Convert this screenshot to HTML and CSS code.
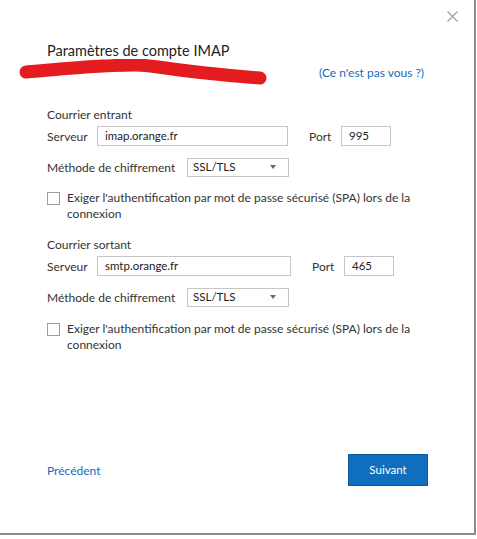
FILE: index.html
```html
<!DOCTYPE html>
<html lang="fr">
<head>
    <meta charset="UTF-8"/>
    <title>Paramètres de compte IMAP</title>
<link rel="stylesheet" href="styles.css">
</head>
<body>
    <div class="window">
        <!-- close button -->
        <div class="topbar">
            <span class="close">
                <svg width="11" height="11" viewBox="0 0 11 11">
                    <path d="M0.5 0.5 L10.5 10.5 M10.5 0.5 L0.5 10.5" stroke="#9a9a9a" stroke-width="1.1" fill="none"/>
                </svg>
            </span>
        </div>

        <h1 class="title">Paramètres de compte IMAP</h1>

        <!-- account line (hidden by a red marker stroke) -->
        <div class="account">
            <svg class="scribble" width="252" height="26" viewBox="0 0 252 26">
                <path d="M8 13 C 35 11, 60 8, 85 7 S 120 5, 140 8 S 190 15, 242 19"
                      stroke="#e41b1f" stroke-width="13" stroke-linecap="round" fill="none"/>
            </svg>
            <a class="not-you" href="#">(Ce n'est pas vous ?)</a>
        </div>

        <!-- incoming mail -->
        <div class="group">
            <div class="group-title">Courrier entrant</div>
            <div class="row">
                <span class="lbl server-lbl">Serveur</span>
                <span class="field server">imap.orange.fr</span>
                <span class="lbl port-lbl">Port</span>
                <span class="field port">995</span>
            </div>
            <div class="row">
                <span class="lbl method-lbl">Méthode de chiffrement</span>
                <span class="select">SSL/TLS<span class="caret"></span></span>
            </div>
            <div class="check-row">
                <span class="box"></span>
                <span class="check-text">Exiger l'authentification par mot de passe sécurisé (SPA) lors de la connexion</span>
            </div>
        </div>

        <!-- outgoing mail -->
        <div class="group">
            <div class="group-title">Courrier sortant</div>
            <div class="row">
                <span class="lbl server-lbl">Serveur</span>
                <span class="field server wide">smtp.orange.fr</span>
                <span class="lbl port-lbl">Port</span>
                <span class="field port">465</span>
            </div>
            <div class="row">
                <span class="lbl method-lbl">Méthode de chiffrement</span>
                <span class="select">SSL/TLS<span class="caret"></span></span>
            </div>
            <div class="check-row">
                <span class="box"></span>
                <span class="check-text">Exiger l'authentification par mot de passe sécurisé (SPA) lors de la connexion</span>
            </div>
        </div>

        <div class="footer">
            <a class="prev" href="#">Précédent</a>
            <span class="next">Suivant</span>
        </div>
    </div>
</body>
</html>
```

FILE: styles.css
```css
* {
    margin: 0;
    padding: 0;
    box-sizing: border-box;
}

html, body {
    background: #fff;
}

body {
    font: 12px Lato, "Open Sans", sans-serif;
    color: #333;
}

.window {
    width: 476px;
    height: 535px;
    display: flex;
    flex-direction: column;
    padding: 0 0 0 47px;
    border-right: 2px solid #8c8c8c;
    border-bottom: 2px solid #8c8c8c;
}

/* Top bar with close cross */
.topbar {
    display: flex;
    justify-content: flex-end;
    padding: 10px 16px 0 0;
    height: 24px;
}

.close {
    width: 11px;
    height: 11px;
}

.title {
    font: 14.5px Lato, "Open Sans", sans-serif;
    color: #222;
    line-height: 20px;
    margin-top: 17px;
}

.account {
    display: flex;
    align-items: center;
    height: 26px;
    margin-top: -2px;
    padding-right: 50px;
}

.scribble {
    margin-left: -29px;
    flex: none;
}

.not-you {
    margin-left: auto;
    color: #0f6cbd;
    text-decoration: none;
    font-size: 12px;
}

/* Groups of fields */
.group {
    margin-top: 22px;
}

.group + .group {
    margin-top: 15px;
}

.group-title {
    line-height: 16px;
}

.row {
    display: flex;
    align-items: center;
    height: 20px;
    margin-top: 3px;
}

.row + .row {
    margin-top: 11px;
}

.lbl {
    flex: none;
}

.server-lbl {
    width: 50px;
}

.port-lbl {
    margin-left: 21px;
    width: 32px;
}

.method-lbl {
    width: 140px;
}

.field, .select {
    height: 20px;
    border: 1px solid #c6c6c6;
    line-height: 18px;
    padding: 0 7px;
    color: #222;
    font-size: 11.5px;
    background: #fff;
}

.field.server {
    width: 191px;
}

.field.server.wide {
    width: 194px;
}

.field.port {
    width: 50px;
}

.select {
    display: flex;
    align-items: center;
    width: 102px;
    height: 19px;
    padding-left: 5px;
}

.caret {
    margin-left: auto;
    margin-right: 5px;
    width: 0;
    height: 0;
    border-left: 3.5px solid transparent;
    border-right: 3.5px solid transparent;
    border-top: 4px solid #666;
}

/* Checkbox */
.check-row {
    display: flex;
    align-items: flex-start;
    margin-top: 13px;
}

.box {
    flex: none;
    width: 13px;
    height: 13px;
    border: 1px solid #9d9d9d;
    background: #fff;
    margin-top: 2px;
}

.check-text {
    margin-left: 7px;
    width: 352px;
    line-height: 16px;
}

.group + .group .check-row {
    margin-top: 14px;
}

/* Footer */
.footer {
    margin-top: auto;
    display: flex;
    align-items: center;
    padding: 0 46px 47px 0;
}

.prev {
    color: #0f6cbd;
    text-decoration: none;
    font-size: 12px;
}

.next {
    margin-left: auto;
    width: 80px;
    height: 32px;
    line-height: 30px;
    text-align: center;
    background: #106ebe;
    border: 1px solid #0c5a9e;
    color: #fff;
    font-size: 11.5px;
}
```
